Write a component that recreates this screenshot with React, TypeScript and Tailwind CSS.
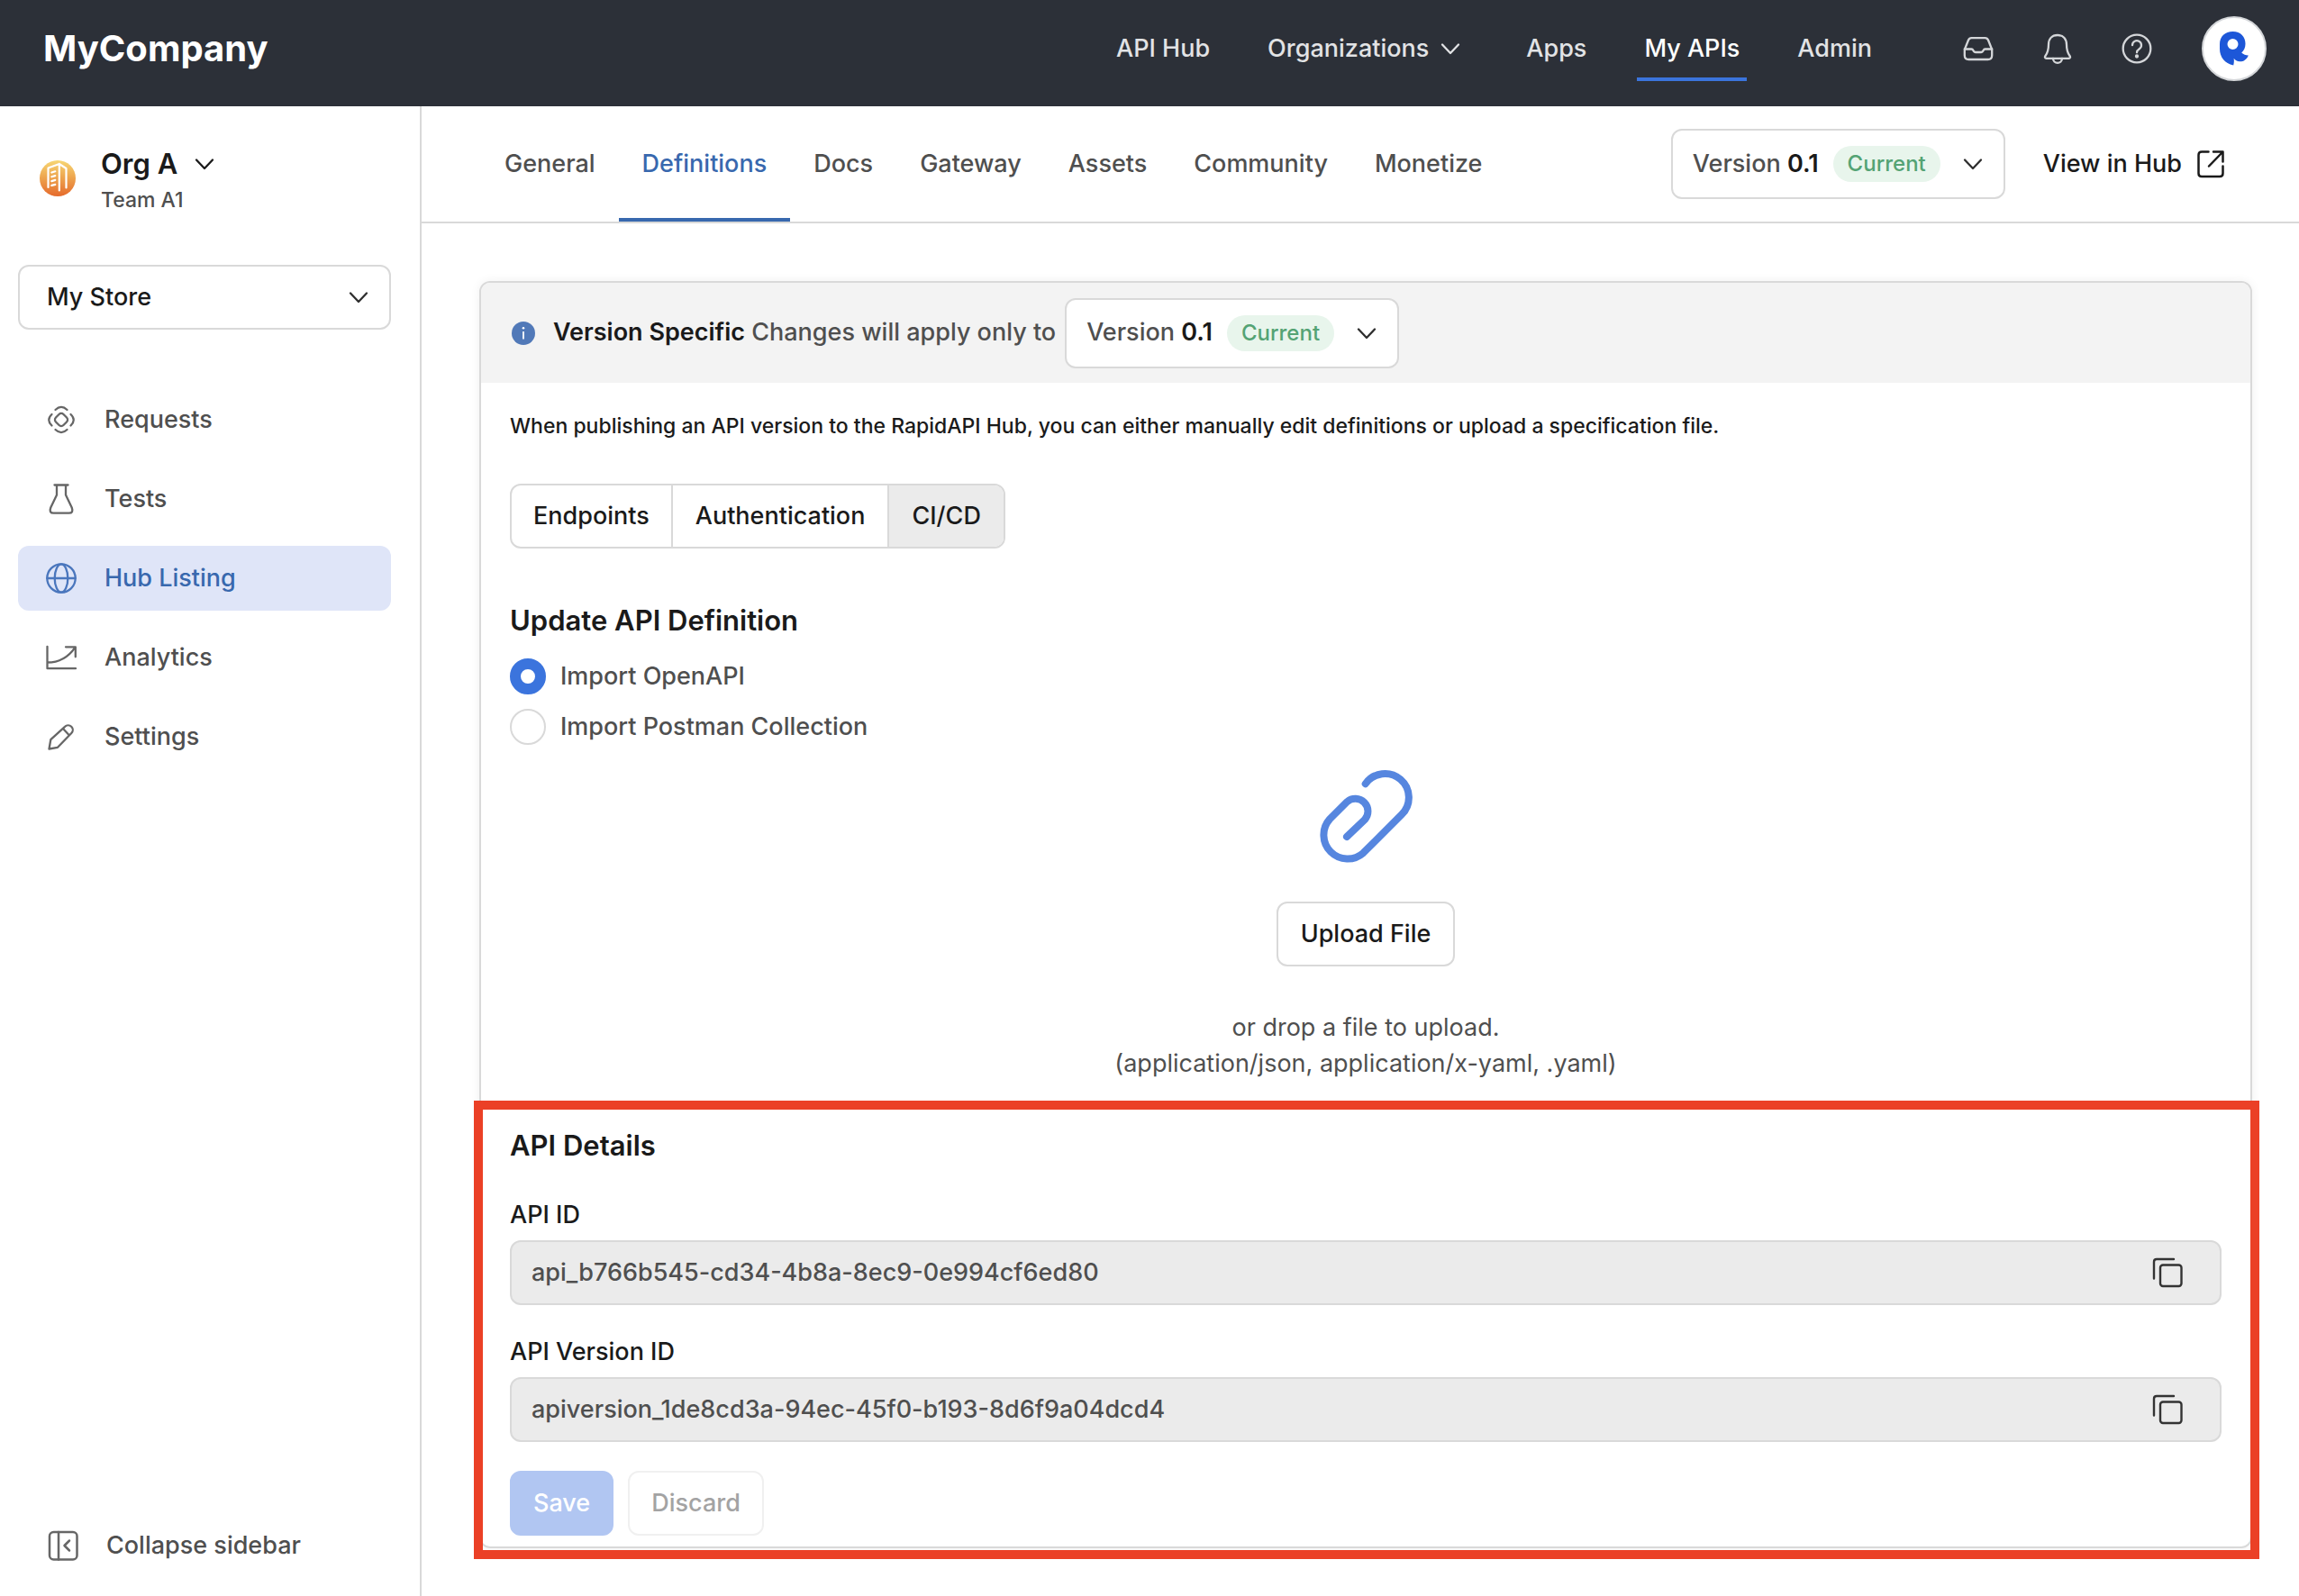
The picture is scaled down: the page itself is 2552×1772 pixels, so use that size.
import { useState } from "react";
import type { ReactNode } from "react";

// All line icons share a 40px grid.
function Icon({ children, width = 2.3 }: { children: ReactNode; width?: number }) {
  return (
    <svg
      viewBox="0 0 40 40"
      className="size-10 shrink-0"
      fill="none"
      stroke="currentColor"
      strokeWidth={width}
      strokeLinecap="round"
      strokeLinejoin="round"
      aria-hidden
    >
      {children}
    </svg>
  );
}

const ChevronIcon = () => (
  <Icon>
    <path d="M11 15.5 20 25l9-9.5" />
  </Icon>
);

const InboxIcon = () => (
  <Icon>
    <path d="M4.8 21 9 10.5Q10 8.2 12.5 8.2h15q2.5 0 3.5 2.3L35.2 21v6.5q0 4.5-4.5 4.5H9.3q-4.5 0-4.5-4.5Z" />
    <path d="M4.8 20.5h7.7q1.2 0 1.7 1.2.8 2.3 3 2.3h5.6q2.2 0 3-2.3.5-1.2 1.7-1.2h7.7" />
  </Icon>
);

const BellIcon = () => (
  <Icon>
    <path d="M20 5c-6.500 0-10 4.500-10 10.500 0 6-1 9-3.500 12.500-1 1.500-.5 2.800 1 2.800h25c1.500 0 2-1.300 1-2.800C31 24.500 30 21.500 30 15.500 30 9.500 26.500 5 20 5Z" />
    <path d="M15 31a5 4.800 0 0 0 10 0" />
  </Icon>
);

const HelpIcon = () => (
  <Icon>
    <circle cx="20" cy="20" r="15.3" />
    <path d="M15 16.2a5 5 0 1 1 7.8 4.1c-1.8 1.2-2.8 2-2.8 4" />
    <circle cx="20" cy="28.5" r="1" fill="currentColor" />
  </Icon>
);

const RequestsIcon = () => (
  <Icon>
    <rect x="14" y="14" width="12" height="12" rx="3.5" transform="rotate(45 20 20)" />
    <path d="M13.5 9Q20 2.8 26.5 9M13.5 31q6.5 6.2 13 0M9.5 14q-6.5 6 0 12.5M30.5 14q6.5 6 0 12.5" />
  </Icon>
);

const FlaskIcon = () => (
  <Icon>
    <path d="M12.5 4.5h15M15 4.5v11L8.3 29.5q-2.3 6.2 3.2 6.2h17q5.5 0 3.2-6.2L25 15.5v-11" />
  </Icon>
);

const GlobeIcon = () => (
  <Icon>
    <circle cx="20" cy="20" r="15.7" />
    <ellipse cx="20" cy="20" rx="7.3" ry="15.7" />
    <path d="M4.3 20h31.4" />
  </Icon>
);

const AnalyticsIcon = () => (
  <Icon>
    <path d="M4.5 7.8v24.4H36M4.5 25.5C18 25.5 28 19.5 35.3 8.8M25 8.3h10.8v11" />
  </Icon>
);

const PencilIcon = () => (
  <Icon>
    <path d="m6.5 33.5 1.8-10.3L24 8.8a5 5 0 0 1 7.3 7.2L16 31.8ZM22 11l6.5 7" />
  </Icon>
);

const CollapseIcon = () => (
  <Icon width={2.5}>
    <rect x="5" y="5" width="30.5" height="30.5" rx="4.5" />
    <path d="M15 5v30.5M27 14.5 21.5 20l5.5 5.5" />
  </Icon>
);

const ExternalIcon = () => (
  <Icon width={2.5}>
    <path d="M17.5 6.5H10q-3.5 0-3.5 3.5v20.5Q6.5 34 10 34h20q3.5 0 3.5-3.5v-8M23 6.5h10.5v11M33.5 6.5 18 22.5" />
  </Icon>
);

const CopyIcon = () => (
  <Icon width={2.4}>
    <rect x="12" y="11.5" width="23.5" height="23.5" rx="3" />
    <path d="M5 26.5V8q0-3 3-3h19" />
  </Icon>
);

function OrgIcon() {
  return (
    <svg viewBox="0 0 40 40" className="mt-4 size-10 shrink-0" aria-hidden>
      <defs>
        <linearGradient id="org" x1="0" y1="0" x2="0" y2="1">
          <stop offset="0" stopColor="#f7d774" />
          <stop offset="0.5" stopColor="#eda24c" />
          <stop offset="1" stopColor="#e56a2c" />
        </linearGradient>
      </defs>
      <circle cx="20" cy="20" r="20" fill="url(#org)" />
      <g fill="none" stroke="#fff" strokeWidth="2.2" strokeLinecap="round" strokeLinejoin="round">
        <path d="M9.5 30V8.5L21.8 4v29.5M21.8 4l7.7 5v21.5" />
        <path d="m13.3 13.5 4-1.2m-4 6 4-1.2m-4 6 4-1.2m-4 6 4-1" />
      </g>
    </svg>
  );
}

function Avatar() {
  return (
    <button
      aria-label="Account"
      className="ml-1 flex size-[72px] items-center justify-center rounded-full border-2 border-[#d4d6d9] bg-white"
    >
      <svg viewBox="0 0 72 72" className="size-[72px] shrink-0" aria-hidden>
        <path
          fill="#1d57d8"
          fillRule="evenodd"
          d="M34.5 17C43.5 17 48.5 23 48.5 30.5c0 4.3-1.5 7.5-4.3 10 2.3 2.2 4.5 2.8 7.6 2.9-1.7 4.6-5.7 7.2-9.7 6.9-2.8-.2-4.8-1.5-6.5-3.6.5 2.3.3 5-.4 7.8C25.5 52.5 20 45.5 20 36v-5C20 22.5 26 17 34.5 17Zm0 8a6 6 0 1 0 0 12 6 6 0 0 0 0-12Z"
        />
      </svg>
    </button>
  );
}

function VersionPicker() {
  return (
    <button
      aria-haspopup="listbox"
      className="flex h-[78px] shrink-0 items-center rounded-xl border-2 border-[#d9d9d9] bg-white pl-[22px] pr-3.5 text-[#4f4f4f]"
    >
      Version&nbsp;<span className="font-semibold text-[#1a1a1a]">0.1</span>
      <span className="mx-4 flex h-10 items-center rounded-full bg-[#e8f5ec] px-4 text-2xl text-[#54a374]">
        Current
      </span>
      <span className="text-[#2e2e2e]">
        <ChevronIcon />
      </span>
    </button>
  );
}

const topLinks = ["API Hub", "Organizations", "Apps", "My APIs", "Admin"];

function Header() {
  return (
    <header className="flex items-center bg-[#2c3038] pt-[18px] pr-9 pb-7 pl-12">
      <a href="#" className="text-[40px] font-bold text-white">
        MyCompany
      </a>
      <nav className="ml-auto flex gap-12">
        {topLinks.map((label) => (
          <a
            key={label}
            href="#"
            className={
              label === "My APIs"
                ? "flex h-[72px] items-center border-b-4 border-[#3b74dd] px-2 pt-1 text-white"
                : "flex h-[72px] items-center px-2 text-[#e2e3e5]"
            }
          >
            {label}
            {label === "Organizations" && (
              <span className="ml-1">
                <ChevronIcon />
              </span>
            )}
          </a>
        ))}
      </nav>
      <div className="ml-[90px] flex items-center gap-12 text-[#d4d6d9]">
        <button aria-label="Inbox">
          <InboxIcon />
        </button>
        <button aria-label="Notifications">
          <BellIcon />
        </button>
        <button aria-label="Help">
          <HelpIcon />
        </button>
        <Avatar />
      </div>
    </header>
  );
}

const sideLinks = [
  { label: "Requests", icon: <RequestsIcon /> },
  { label: "Tests", icon: <FlaskIcon /> },
  { label: "Hub Listing", icon: <GlobeIcon />, active: true },
  { label: "Analytics", icon: <AnalyticsIcon /> },
  { label: "Settings", icon: <PencilIcon /> },
];

function Sidebar() {
  return (
    <aside className="flex w-[468px] shrink-0 flex-col border-r-2 border-[#d9d9d9] pt-11 pr-8 pb-5 pl-5">
      <button className="flex items-start gap-7 pl-6 text-left">
        <OrgIcon />
        <span>
          <span className="flex items-center gap-2.5 text-[31px] leading-10 font-semibold">
            Org A
            <ChevronIcon />
          </span>
          <span className="block text-[23px] leading-10 text-[#4f4f4f]">Team A1</span>
        </span>
      </button>

      <div className="relative mt-[52px]">
        <select
          aria-label="Project"
          className="h-[72px] w-full appearance-none rounded-xl border-2 border-[#d9d9d9] bg-white pl-[30px]"
        >
          <option>My Store</option>
        </select>
        <span className="pointer-events-none absolute top-4 right-4 text-[#2e2e2e]">
          <ChevronIcon />
        </span>
      </div>

      <nav className="mt-16 flex flex-col gap-4">
        {sideLinks.map(({ label, icon, active }) => (
          <a
            key={label}
            href="#"
            className={
              active
                ? "flex h-[72px] items-center gap-7 rounded-xl bg-[#dfe5f8] pl-7 text-[#3868ae]"
                : "flex h-[72px] items-center gap-7 rounded-xl pl-7 text-[#4f4f4f]"
            }
          >
            <span className={active ? "text-[#4a76bd]" : "text-[#666]"}>{icon}</span>
            {label}
          </a>
        ))}
      </nav>

      <button className="mt-auto flex h-[72px] items-center gap-7 pl-[30px] text-[#4f4f4f]">
        <span className="text-[#666]">
          <CollapseIcon />
        </span>
        Collapse sidebar
      </button>
    </aside>
  );
}

const tabs = ["General", "Definitions", "Docs", "Gateway", "Assets", "Community", "Monetize"];

function TabBar() {
  return (
    <div className="flex h-[130px] items-center border-b-2 border-[#d9d9d9] pr-[78px] pl-[66px]">
      <nav className="flex h-full">
        {tabs.map((label) => (
          <a
            key={label}
            href="#"
            className={
              label === "Definitions"
                ? "flex items-center border-b-4 border-[#3868ae] px-[26px] pt-1 text-[#3868ae]"
                : "flex items-center px-[26px] text-[#4f4f4f]"
            }
          >
            {label}
          </a>
        ))}
      </nav>
      <div className="ml-auto flex items-center gap-[42px]">
        <VersionPicker />
        <a href="#" className="flex items-center gap-3">
          View in Hub
          <ExternalIcon />
        </a>
      </div>
    </div>
  );
}

function CopyField({ id, label, value }: { id: string; label: string; value: string }) {
  return (
    <div>
      <label htmlFor={id} className="block leading-10">
        {label}
      </label>
      <div className="mt-2 flex h-[72px] items-center rounded-xl border-2 border-[#d9d9d9] bg-[#ebebeb] pr-[38px] pl-[22px]">
        <input id={id} value={value} readOnly className="min-w-0 flex-1 text-[#4f4f4f] outline-none" />
        <button aria-label={`Copy ${label}`} className="text-[#333]">
          <CopyIcon />
        </button>
      </div>
    </div>
  );
}

const sources = ["Import OpenAPI", "Import Postman Collection"];

function Definitions() {
  const [source, setSource] = useState(sources[0]);

  return (
    <section className="rounded-xl border-2 border-[#d9d9d9] shadow-[0_0_12px_rgba(0,0,0,0.06)]">
      <div className="flex h-[111px] items-center rounded-t-[10px] bg-[#f3f3f3] pl-[34px]">
        <svg viewBox="0 0 26 26" className="size-[26px]" aria-hidden>
          <circle cx="13" cy="13" r="13" fill="#5179b8" />
          <path d="M13 11v8.5" stroke="#fff" strokeWidth="1.8" />
          <circle cx="13" cy="7.3" r="1.3" fill="#fff" />
        </svg>
        <p className="mr-2.5 ml-5 text-[#4f4f4f]">
          <strong className="font-semibold text-[#1a1a1a]">Version Specific</strong> Changes will
          apply only to
        </p>
        <VersionPicker />
      </div>

      <div className="px-8 pt-7">
        <p className="text-[23px] leading-10">
          When publishing an API version to the RapidAPI Hub, you can either manually edit
          definitions or upload a specification file.
        </p>

        <div className="mt-11 flex h-[72px] w-fit divide-x-2 divide-[#d9d9d9] overflow-hidden rounded-xl border-2 border-[#d9d9d9]">
          <button className="px-6">Endpoints</button>
          <button className="px-[25px]">Authentication</button>
          <button className="bg-[#ebebeb] px-[25px]">CI/CD</button>
        </div>

        <h2 className="mt-[60px] text-[31px] leading-10 font-semibold">Update API Definition</h2>
        <div className="mt-[22px] flex flex-col gap-4 text-[#4f4f4f]">
          {sources.map((name) => (
            <label key={name} className="flex w-fit items-center gap-4 leading-10">
              <input
                type="radio"
                name="source"
                checked={source === name}
                onChange={() => setSource(name)}
                className="size-10 appearance-none rounded-full border-2 border-[#d9d9d9] checked:border-12 checked:border-[#3b74dd]"
              />
              {name}
            </label>
          ))}
        </div>

        <div className="mt-7 flex flex-col items-center">
          <svg
            viewBox="0 0 104 104"
            className="size-[104px] overflow-visible"
            fill="none"
            stroke="#5686df"
            strokeWidth="8"
            strokeLinecap="round"
            aria-hidden
          >
            <path d="M51.7 15.2A26.5 26.5 0 1 1 91.9 49.4L49.4 91.9A26.5 26.5 0 0 1 12 54.5L31.3 35.200A14 14 0 0 1 51 55L31 74" />
          </svg>
          <button className="mt-[42px] h-[72px] rounded-xl border-2 border-[#d9d9d9] px-[25px]">
            Upload File
          </button>
          <p className="mt-12 text-center leading-10 font-normal text-[#4f4f4f]">
            or drop a file to upload.
            <br />
            (application/json, application/x-yaml, .yaml)
          </p>
        </div>
      </div>

      <div className="relative mt-[21px] px-8 pt-[30px] pb-3">
        {/* highlight frame, drawn over the card border */}
        <div className="pointer-events-none absolute top-0 -right-2.5 -bottom-3.5 -left-2 border-10 border-[#eb4026]" />
        <h2 className="text-[31px] leading-10 font-semibold">API Details</h2>
        <div className="mt-[37px] flex flex-col gap-8">
          <CopyField id="api-id" label="API ID" value="api_b766b545-cd34-4b8a-8ec9-0e994cf6ed80" />
          <CopyField
            id="api-version-id"
            label="API Version ID"
            value="apiversion_1de8cd3a-94ec-45f0-b193-8d6f9a04dcd4"
          />
        </div>
        <div className="mt-8 flex gap-4">
          <button
            disabled
            className="h-[72px] rounded-xl border-2 border-[#b1c6f2] bg-[#b1c6f2] px-6 text-white"
          >
            Save
          </button>
          <button
            disabled
            className="h-[72px] rounded-xl border-2 border-[#f0f0f0] px-6 text-[#a3a3a3]"
          >
            Discard
          </button>
        </div>
      </div>
    </section>
  );
}

export default function App() {
  return (
    <div className="flex min-h-screen flex-col bg-white font-['Inter',sans-serif] text-[27px] font-medium text-[#1a1a1a]">
      <Header />
      <div className="flex flex-1">
        <Sidebar />
        <main className="min-w-0 flex-1">
          <TabBar />
          <div className="pt-16 pr-[52px] pb-12 pl-16">
            <Definitions />
          </div>
        </main>
      </div>
    </div>
  );
}
